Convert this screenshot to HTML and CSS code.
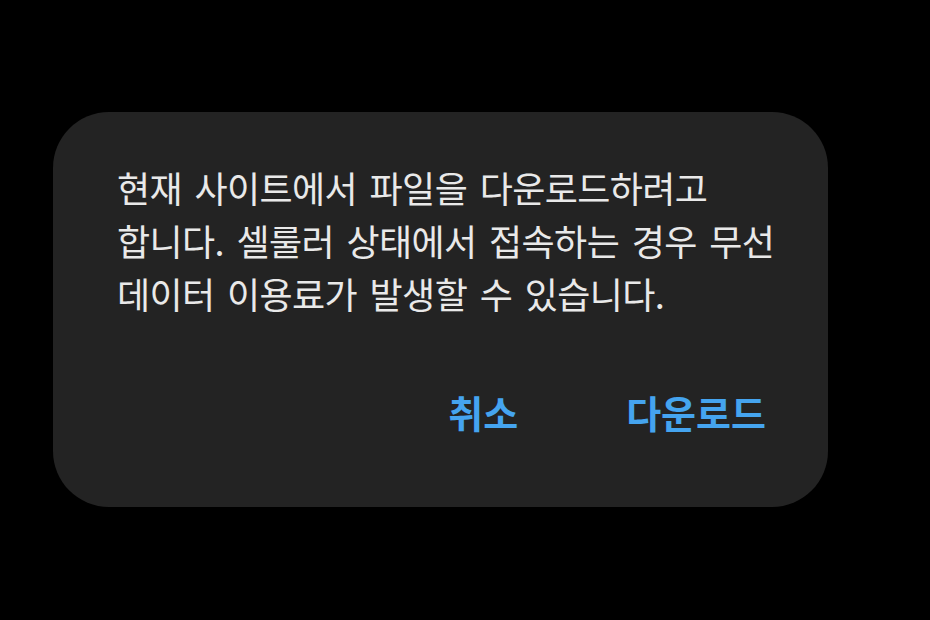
FILE: index.html
```html
<!DOCTYPE html>
<html lang="ko">
<head>
<meta charset="utf-8">
<link rel="stylesheet" href="styles.css">
</head>
<body>
<div class="dialog">
  <p class="message">현재 사이트에서 파일을 다운로드하려고<br>합니다. 셀룰러 상태에서 접속하는 경우 무선<br>데이터 이용료가 발생할 수 있습니다.</p>
  <div class="actions">
    <button class="btn btn-cancel">취소</button>
    <button class="btn btn-ok">다운로드</button>
  </div>
</div>
</body>
</html>
```
FILE: styles.css
```css
html, body {
  margin: 0;
  padding: 0;
  background: #000;
  width: 930px;
  height: 620px;
  overflow: hidden;
}
body {
  padding-top: 112px;
  padding-left: 53px;
  box-sizing: border-box;
  font-family: "Noto Sans CJK KR", "Noto Sans", sans-serif;
}
.dialog {
  width: 775px;
  height: 395px;
  box-sizing: border-box;
  background: #232323;
  border-radius: 56px;
  padding: 49px 40px 0 64px;
}
.message {
  margin: 0;
  color: #e9e9e9;
  font-size: 36px;
  line-height: 53px;
  letter-spacing: -0.6px;
  word-spacing: 3px;
}
.actions {
  display: flex;
  justify-content: flex-end;
  margin-top: 67px;
  gap: 108px;
  padding-right: 22px;
}
.btn {
  background: none;
  border: none;
  padding: 0;
  font-family: inherit;
  font-size: 38px;
  font-weight: 700;
  color: #45a4ef;
  line-height: 50px;
}
```
